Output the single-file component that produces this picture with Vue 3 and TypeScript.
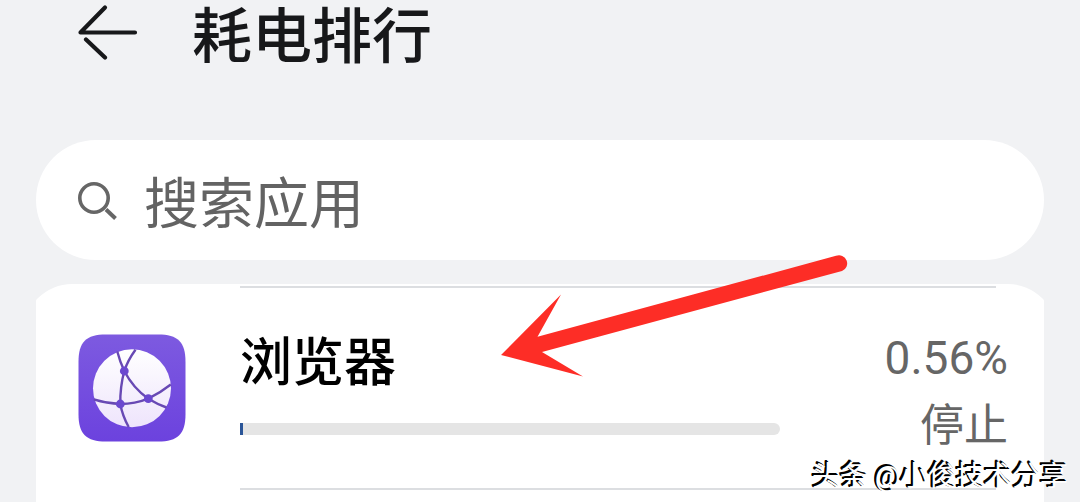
<script setup lang="ts">
import { ref } from 'vue'

interface AppUsage {
  id: string
  name: string
  percent: number
  action: string
}

const query = ref('')
const apps = ref<AppUsage[]>([
  { id: 'browser', name: '浏览器', percent: 0.56, action: '停止' },
])
</script>

<template>
  <main class="page">
    <header class="header">
      <button class="back" type="button" aria-label="返回">
        <svg width="60" height="56" viewBox="0 0 60 56" fill="none" stroke="#17181a" stroke-width="4.2" stroke-linecap="round" stroke-linejoin="round">
          <path d="M57 28.500H2.500L27 3.500" />
          <path d="M27 53.500L8 35.500" />
        </svg>
      </button>
      <h1 class="title">耗电排行</h1>
    </header>

    <label class="search">
      <svg class="search-icon" width="40" height="40" viewBox="0 0 40 40" fill="none" stroke="#666" stroke-width="3.600">
        <circle cx="16" cy="18" r="14.200" />
        <path d="M28 29.500L37.500 38.500" stroke-width="4" />
      </svg>
      <input v-model="query" class="search-input" type="text" placeholder="搜索应用" aria-label="搜索应用" />
    </label>

    <section class="clip">
      <ul class="card">
        <li v-for="app in apps" :key="app.id" class="row">
          <svg class="app-icon" width="108" height="108" viewBox="0 0 108 108" aria-hidden="true">
            <defs>
              <linearGradient id="tile" x1="0" y1="0" x2="0" y2="1">
                <stop offset="0" stop-color="#7d5ae0" />
                <stop offset="1" stop-color="#6c42de" />
              </linearGradient>
              <linearGradient id="globe" x1="0" y1="0" x2="0" y2="1">
                <stop offset="0" stop-color="#ffffff" />
                <stop offset="1" stop-color="#eee4fc" />
              </linearGradient>
            </defs>
            <path d="M28 0.500H80C100 0.500 107.500 8 107.500 28V80C107.500 100 100 107.500 80 107.500H28C8 107.500 0.500 100 0.500 80V28C0.500 8 8 0.500 28 0.500Z" fill="url(#tile)" />
            <circle cx="54" cy="54.300" r="39" fill="url(#globe)" />
            <g fill="none" stroke="#6849b4" stroke-width="2.400">
              <path d="M39.300 17.500Q42 28 46.300 37Q50 26 57.500 15.800" />
              <path d="M46.300 37Q42 53 42.300 70Q44.500 82 50.700 93" />
              <path d="M46.300 37Q55 54 70.300 64.700Q79 70 88.500 73.500" />
              <path d="M15.800 65.300Q29 69.500 42.300 70Q57 70 70.300 64.700Q82 59 92.800 50.500" />
            </g>
            <g fill="#6b48cf">
              <circle cx="46.300" cy="37" r="4.400" />
              <circle cx="42.300" cy="70" r="4.400" />
              <circle cx="70.300" cy="64.700" r="4.400" />
            </g>
          </svg>
          <div class="info">
            <span class="name">{{ app.name }}</span>
            <div class="track" role="img" :aria-label="`${app.percent}%`">
              <div class="fill" :style="{ width: app.percent + '%' }"></div>
            </div>
          </div>
          <div class="side">
            <span class="percent">{{ app.percent }}%</span>
            <button class="stop" type="button">{{ app.action }}</button>
          </div>
        </li>
      </ul>
    </section>

    <svg class="pointer" width="350" height="124" viewBox="0 0 350 124" aria-hidden="true">
      <path d="M1 101L61 40.500L37.500 82.800L336 1.800A8 8 0 0 1 342 17L42 98L83 122.500Z" fill="#fd2d26" />
    </svg>
    <p class="watermark">头条 @小俊技术分享</p>
  </main>
</template>

<style>
body {
  margin: 0;
  background: #f1f2f4;
}
</style>

<style scoped>
.page {
  position: relative;
  display: flex;
  flex-direction: column;
  box-sizing: border-box;
  min-height: 100vh;
  padding: 0 36px;
  overflow: hidden;
  background: #f1f2f4;
  font-family: Roboto, "Noto Sans CJK SC", sans-serif;
}

.header {
  display: flex;
  align-items: flex-start;
  gap: 54px;
  height: 76px;
  padding-left: 42px;
  margin-bottom: 64px;
}

button {
  padding: 0;
  border: 0;
  background: none;
  font: inherit;
  cursor: pointer;
}

.back {
  display: flex;
  padding-top: 4px;
}

.title {
  margin: 0;
  color: #17181a;
  font-size: 60px;
  font-weight: 500;
  line-height: 76px;
}

.search {
  display: flex;
  align-items: center;
  gap: 26px;
  height: 120px;
  box-sizing: border-box;
  padding: 0 42px;
  border-radius: 60px;
  background: #fff;
}

.search-icon {
  flex: none;
}

.search-input {
  flex: 1;
  min-width: 0;
  height: 100px;
  padding: 8px 0 0;
  box-sizing: border-box;
  border: 0;
  outline: 0;
  background: none;
  color: #191919;
  font: inherit;
  font-size: 55px;
}

.search-input::placeholder {
  color: #636363;
  opacity: 1;
}

.clip {
  display: flex;
  flex: 1;
  margin-top: 24px;
  overflow: hidden;
}

.card {
  flex: 1;
  margin: 0 -12px;
  padding: 2px 48px 0 54px;
  border-radius: 48px 48px 0 0;
  background: #fff;
  list-style: none;
}

.row {
  position: relative;
  display: flex;
  align-items: flex-start;
  height: 204px;
}

.row::before,
.row::after {
  content: "";
  position: absolute;
  left: 162px;
  right: 12px;
  height: 2px;
  background: #dcdee1;
}

.row::before {
  top: 0;
}

.row::after {
  bottom: 0;
}

.app-icon {
  flex: none;
  margin: 48px 54px 0 0;
}

.info {
  display: flex;
  flex: 1;
  flex-direction: column;
  gap: 25px;
  max-width: 540px;
  padding-top: 44px;
}

.name {
  color: #000;
  font-size: 52px;
  font-weight: 500;
  line-height: 68px;
}

.track {
  height: 12px;
  overflow: hidden;
  border-radius: 0 6px 6px 0;
  background: #e5e5e5;
}

.fill {
  height: 100%;
  background: #2a5598;
}

.side {
  display: flex;
  flex-direction: column;
  align-items: flex-end;
  margin-left: auto;
  padding-top: 40px;
  color: #666;
}

.percent {
  font-size: 46px;
  line-height: 64px;
}

.stop {
  color: #666;
  font-size: 44px;
  line-height: 72px;
}

.pointer {
  position: absolute;
  top: 254px;
  left: 500px;
}

.watermark {
  position: absolute;
  right: 12px;
  bottom: 5px;
  margin: 0;
  color: #fff;
  font-size: 28px;
  line-height: 40px;
  text-shadow: -1px -1px 0 #000, -2px -1px 0 #000, -2px -2px 0 #000;
}
</style>
